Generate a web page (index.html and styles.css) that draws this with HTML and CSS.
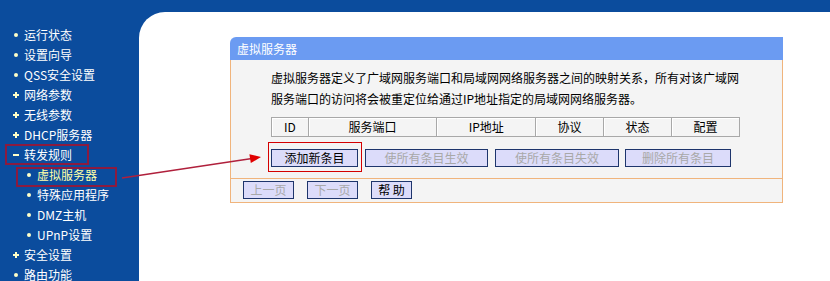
FILE: index.html
```html
<!DOCTYPE html>
<html lang="zh-CN">
<head>
<meta charset="utf-8">
<title>虚拟服务器</title>
<link rel="stylesheet" href="styles.css">
</head>
<body>
<div class="page">
  <nav class="side">
    <ul class="menu">
      <li class="item"><span class="dot"></span>运行状态</li>
      <li class="item"><span class="dot"></span>设置向导</li>
      <li class="item"><span class="dot"></span>QSS安全设置</li>
      <li class="item"><svg class="sign" width="6" height="6" viewBox="0 0 6 6"><path d="M2 0h2v2h2v2H4v2H2V4H0V2h2z"/></svg>网络参数</li>
      <li class="item"><svg class="sign" width="6" height="6" viewBox="0 0 6 6"><path d="M2 0h2v2h2v2H4v2H2V4H0V2h2z"/></svg>无线参数</li>
      <li class="item"><svg class="sign" width="6" height="6" viewBox="0 0 6 6"><path d="M2 0h2v2h2v2H4v2H2V4H0V2h2z"/></svg>DHCP服务器</li>
      <li class="item mark-a"><svg class="sign" width="6" height="6" viewBox="0 0 6 6"><path d="M0 2h6v2H0z"/></svg>转发规则</li>
      <li class="item sub current mark-b"><span class="dot"></span>虚拟服务器</li>
      <li class="item sub"><span class="dot"></span>特殊应用程序</li>
      <li class="item sub"><span class="dot"></span>DMZ主机</li>
      <li class="item sub"><span class="dot"></span>UPnP设置</li>
      <li class="item"><svg class="sign" width="6" height="6" viewBox="0 0 6 6"><path d="M2 0h2v2h2v2H4v2H2V4H0V2h2z"/></svg>安全设置</li>
      <li class="item"><span class="dot"></span>路由功能</li>
    </ul>
  </nav>
  <main class="main">
    <section class="panel">
      <h2 class="panel-title">虚拟服务器</h2>
      <div class="panel-body">
        <p class="desc">虚拟服务器定义了广域网服务端口和局域网网络服务器之间的映射关系，所有对该广域网<br>服务端口的访问将会被重定位给通过IP地址指定的局域网网络服务器。</p>
        <table class="list">
          <tr>
            <th class="c-id">ID</th>
            <th class="c-port">服务端口</th>
            <th class="c-ip">IP地址</th>
            <th class="c-s">协议</th>
            <th class="c-s">状态</th>
            <th class="c-s">配置</th>
          </tr>
        </table>
        <div class="actions">
          <span class="focus"><button class="btn w-add" type="button">添加新条目</button></span>
          <button class="btn w-on" type="button" disabled>使所有条目生效</button>
          <button class="btn w-off" type="button" disabled>使所有条目失效</button>
          <button class="btn w-del" type="button" disabled>删除所有条目</button>
        </div>
      </div>
      <div class="panel-foot">
        <button class="btn w-page" type="button" disabled>上一页</button>
        <button class="btn w-page" type="button" disabled>下一页</button>
        <button class="btn w-help" type="button">帮 助</button>
      </div>
    </section>
  </main>
</div>
<svg class="arrow" width="830" height="281" viewBox="0 0 830 281">
  <line x1="122" y1="178" x2="252" y2="158.4" stroke="#b0203c" stroke-width="1.5"/>
  <polygon points="261,157 249.4,154.2 250.8,163.1" fill="#e00000"/>
</svg>
</body>
</html>
```

FILE: styles.css
```css
html, body {
  margin: 0;
  height: 281px;
  overflow: hidden;
}
body {
  position: relative;
  background: #0b4c9d;
  font: 12px "Noto Sans CJK SC", "Liberation Sans", sans-serif;
  color: #000;
}
.page {
  display: flex;
  height: 281px;
}
.side {
  width: 139px;
  flex: none;
  padding-top: 25px;
}
.menu {
  list-style: none;
  margin: 0;
  padding: 0;
}
.item {
  position: relative;
  height: 20px;
  display: flex;
  align-items: center;
  padding-left: 13px;
  color: #fff;
  line-height: 20px;
  white-space: nowrap;
}
.item.sub {
  padding-left: 26px;
}
.item.current {
  color: #ffffa8;
}
.dot {
  width: 4px;
  height: 4px;
  border-radius: 50%;
  background: #ffffc8;
  margin: 0 6px 0 1px;
  flex: none;
}
.sign {
  fill: #ffffc8;
  margin-right: 5px;
  flex: none;
}
.mark-a::before,
.mark-b::before {
  content: "";
  position: absolute;
  box-sizing: border-box;
  border: 2px solid #8b1b3f;
}
.mark-a::before {
  left: 5px;
  top: -1px;
  width: 84px;
  height: 21px;
}
.mark-b::before {
  left: 16px;
  top: 2px;
  width: 101px;
  height: 20px;
}
.main {
  flex: 1;
  margin-top: 12px;
  background: #fff;
  border-top-left-radius: 26px;
}
.panel {
  margin: 25px 0 0 91px;
  width: 553px;
}
.panel-title {
  margin: 0;
  height: 23px;
  line-height: 23px;
  padding-left: 7px;
  font-size: 12px;
  font-weight: normal;
  color: #fff;
  background: #6b9bf2;
  border-top-left-radius: 6px;
}
.panel-body {
  border-left: 1px solid #f0b47c;
  border-right: 1px solid #f0b47c;
  background: #f4f4f4;
  padding: 7px 0 6px 40px;
}
.desc {
  margin: 0;
  line-height: 21px;
  white-space: nowrap;
}
.list {
  margin-top: 8px;
  width: 469px;
  border-collapse: collapse;
}
.list th {
  height: 18px;
  padding: 0;
  border: 1px solid #a8a8a8;
  box-shadow: inset 1px 1px 0 #fff;
  font-weight: normal;
  text-align: center;
  line-height: 18px;
}
.c-id { width: 36px; }
.c-port { width: 130px; }
.c-ip { width: 99px; }
.c-s { width: 68px; }
.actions {
  display: flex;
  align-items: flex-start;
  margin: 5px 0 0 -3px;
}
.focus {
  display: flex;
  border: 1px solid #d40000;
  padding: 6px 3px 4px 2px;
  margin-right: 3px;
}
.btn {
  height: 18px;
  box-sizing: border-box;
  border: 1px solid #1e356c;
  background: #dcdcfa;
  font: 12px "Noto Sans CJK SC", "Liberation Sans", sans-serif;
  color: #000;
  padding: 0;
  line-height: 16px;
  margin: 0;
}
.btn:disabled {
  color: #a8a8a8;
}
.actions > .btn {
  margin-top: 7px;
}
.w-add { width: 87px; }
.w-on { width: 123px; margin-right: 7px; }
.w-off { width: 124px; margin-right: 6px; }
.w-del { width: 106px; }
.panel-foot {
  display: flex;
  gap: 13px;
  border: 1px solid #f0b47c;
  background: #f4f4f4;
  padding: 2px 0 3px 12px;
}
.w-page { width: 51px; }
.w-help { width: 41px; }
.arrow {
  position: absolute;
  left: 0;
  top: 0;
  pointer-events: none;
}
```
